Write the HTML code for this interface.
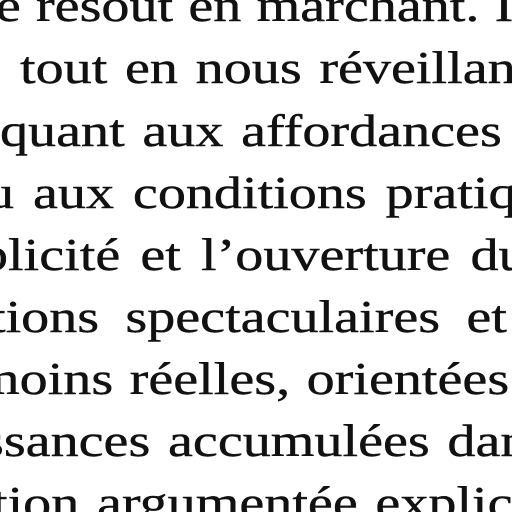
<!DOCTYPE html>
<html><head><meta charset="utf-8"><style>
html,body{margin:0;padding:0;background:#fff;width:512px;height:512px;overflow:hidden;position:relative}
.w{position:absolute;left:0;top:0;width:512px;height:512px;overflow:hidden}
.l{position:absolute;white-space:nowrap;font-family:"Liberation Serif",serif;font-size:46px;line-height:62px;height:62px;color:#111;transform:scaleX(1.22);transform-origin:0 0;-webkit-text-stroke:0.4px #111}
</style></head><body><div class="w">
<div class="l" style="top:-25px;left:-26px;word-spacing:1px">se résout en marchant. I</div>
<div class="l" style="top:37px;left:20px;word-spacing:3px">tout en nous réveillant</div>
<div class="l" style="top:100px;left:0px;word-spacing:3px">quant aux affordances</div>
<div class="l" style="top:162px;left:-14px;word-spacing:4px">u aux conditions pratiques</div>
<div class="l" style="top:224px;left:-20px;word-spacing:5px">plicité et l’ouverture du</div>
<div class="l" style="top:286px;left:-10px;word-spacing:10px">tions spectaculaires et</div>
<div class="l" style="top:348px;left:-24px;word-spacing:2px">moins réelles, orientées</div>
<div class="l" style="top:410px;left:-18px;word-spacing:3px">ssances accumulées dans</div>
<div class="l" style="top:472px;left:-8px;word-spacing:3px">tion argumentée explicite</div>
</div></body></html>
